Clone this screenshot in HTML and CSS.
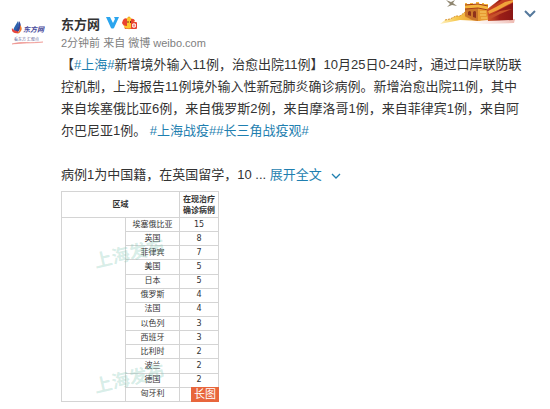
FILE: index.html
```html
<!DOCTYPE html>
<html lang="zh-CN">
<head>
  <meta charset="UTF-8" />
  <meta name="viewport" content="width=device-width, initial-scale=1" />
  <title>东方网 - 微博</title>
  <link rel="stylesheet" href="styles.css">
</head>
<body>
  <article class="post">
    <a class="avatar" href="#" aria-label="东方网">
      <svg width="34" height="28" viewBox="0 0 34 28">
        <path d="M7 2 C9 6 8 11 3 13 C1 10 5 6 7 2Z" fill="#2c63ae"/>
        <path d="M8 2 C11 6 10 10 7 13 L3 13 C7 10 8 7 8 2Z" fill="#33459b"/>
        <path d="M1 9 C0 13 4 16 9 13 C6 12 3 12 1 9Z" fill="#e8453c"/>
        <path d="M9 6 C12 9 11 13 6 15 C9 12 9 9 9 6Z" fill="#ee7a2e"/>
        <path d="M1 25 C10 22 20 25 32 23 C20 24 10 24 1 25Z" fill="#ec8a85" stroke="#ec8a85" stroke-width=".5"/>
        <text class="logo-name" x="12" y="13">东方网</text>
        <text class="logo-motto" x="3" y="22">看东方 汇观点</text>
      </svg>
    </a>

    <div class="main">
      <header class="head">
        <div class="name-row">
          <a class="name" href="#">东方网</a>
          <svg class="verified" width="13" height="12" viewBox="0 0 13 12">
            <path d="M0 0 H4 L7 6 L9 2 L8 0 H13 L8 11 Q6.500 12 5 11Z" fill="#2ba5ee"/>
          </svg>
          <svg width="16" height="14" viewBox="0 0 16 14">
            <circle cx="7" cy="2" r="1.600" fill="#f5a623"/>
            <circle cx="7" cy="7.500" r="5.800" fill="#fcc62d"/>
            <path d="M1 4 Q3 1 5 3 L5 10 Q1 10 0 7Z" fill="#e9432f"/>
            <path d="M9 3 Q12 2 13 5 L9 7Z" fill="#e9432f"/>
            <path d="M2 11 Q7 14 10 11 L10 13 H3Z" fill="#ee6b27"/>
            <path d="M6 5 V7 M8.500 5 V7" stroke="#7a3914"/>
            <rect x="9" y="6" width="6" height="7" rx="1" fill="#e8402f"/>
            <path d="M10.500 8 H13.500 V11 H10.500Z M12 7 V12" fill="none" stroke="#fff" stroke-width=".8"/>
          </svg>
        </div>
        <p class="from"><a href="#">2分钟前</a> 来自 <a href="#">微博 weibo.com</a></p>
      </header>

      <p class="text">【<a href="#">#上海#</a>新增境外输入11例，治愈出院11例】10月25日0-24时，通过口岸联防联控机制，上海报告11例境外输入性新冠肺炎确诊病例。新增治愈出院11例，其中来自埃塞俄比亚6例，来自俄罗斯2例，来自摩洛哥1例，来自菲律宾1例，来自阿尔巴尼亚1例。 <a href="#">#上海战疫#</a><a href="#">#长三角战疫观#</a><br><br>病例1为中国籍，在英国留学，10 ... <a href="#">展开全文
        <svg class="unfold" width="10" height="6" viewBox="0 0 10 6"><path d="M1 1 L5 5 L9 1" fill="none" stroke="#1f7fb0" stroke-width="1.300"/></svg></a></p>

      <div class="picture">
        <table class="cases">
          <thead>
            <tr><th colspan="2">区域</th><th>在现治疗<br>确诊病例</th></tr>
          </thead>
          <tbody>
            <tr><td class="group" rowspan="13"></td><td>埃塞俄比亚</td><td>15</td></tr>
            <tr><td>英国</td><td>8</td></tr>
            <tr><td>菲律宾</td><td>7</td></tr>
            <tr><td>美国</td><td>5</td></tr>
            <tr><td>日本</td><td>5</td></tr>
            <tr><td>俄罗斯</td><td>4</td></tr>
            <tr><td>法国</td><td>4</td></tr>
            <tr><td>以色列</td><td>3</td></tr>
            <tr><td>西班牙</td><td>3</td></tr>
            <tr><td>比利时</td><td>2</td></tr>
            <tr><td>波兰</td><td>2</td></tr>
            <tr><td>德国</td><td>2</td></tr>
            <tr><td>匈牙利</td><td></td></tr>
          </tbody>
        </table>
        <span class="watermark watermark-top">上海发布</span>
        <span class="watermark watermark-bottom">上海发布</span>
        <span class="long-tag">长图</span>
      </div>
    </div>

    <svg class="cover" width="78" height="26" viewBox="0 0 78 26">
      <defs>
        <linearGradient id="wall" x1="0" x2="1">
          <stop offset="0" stop-color="#fff3c4"/>
          <stop offset=".4" stop-color="#f6c84e"/>
          <stop offset="1" stop-color="#e8942c"/>
        </linearGradient>
        <linearGradient id="hill" x1="0" x2="1">
          <stop offset="0" stop-color="#d9612b"/>
          <stop offset=".5" stop-color="#9c1f18"/>
          <stop offset="1" stop-color="#8a1615"/>
        </linearGradient>
        <linearGradient id="mist" x1="0" x2="1">
          <stop offset="0" stop-color="#fff" stop-opacity="0"/>
          <stop offset="1" stop-color="#eeb9b0"/>
        </linearGradient>
      </defs>
      <path d="M8 0 L12 4 L9 7 L14 5 L19 6 L15 3 L17 0 L13 2Z" fill="#8f8670"/>
      <path d="M20 21 L77 19 L76 23 L45 24Z" fill="url(#mist)"/>
      <path d="M48 10 L61 0 H75 V20 L50 21Z" fill="url(#hill)"/>
      <path d="M50 10 L60 3 L64 0 H75 V3 L61 10 L51 16Z" fill="#c33c20"/>
      <path d="M50 11 L58 7 L67 2 L75 0 V2 L60 10 L51 14Z" fill="#f0a23a"/>
      <path d="M52 16 L62 11 L74 9 L62 14 L52 19Z" fill="#c6502a"/>
      <path d="M2 24 L7 20 L12 19 L18 16 L22 16 L27 12 L32 14 L40 19 L43 21 L22 20Z" fill="url(#wall)"/>
      <path d="M7 20 L12 19 L18 16 L22 16 L27 12" fill="none" stroke="#d8922e" stroke-dasharray="2 1"/>
      <path d="M27 8 L40 7 L49 10 L50 20 L40 21 L27 17Z" fill="#e79b31"/>
      <path d="M27 9 L40 8 V21 L34 20 L27 16Z" fill="#c9762a"/>
      <path d="M27 3 H29 V4 H32 V3 H35 V4 H38 V2 H41 V4 H44 V3 H46 V4 H50 V10 L40 8 L27 9Z" fill="#f4b63d"/>
      <path d="M27 5 L40 4 L50 6 M27 9 L40 8 L50 10" fill="none" stroke="#a63c18"/>
      <path d="M30 15 V12 Q32 10 33 12 V16 M35 17 V12 Q37 10 38 12 V18" fill="#8e321b"/>
      <path d="M42 12 H48 M42 15 H48 M43 18 H49" stroke="#f9d06b"/>
    </svg>
    <button class="menu" type="button" aria-label="更多">
      <svg width="12" height="8" viewBox="0 0 12 8"><path d="M1 1 L6 6 L11 1" fill="none" stroke="#55799c" stroke-width="2"/></svg>
    </button>
  </article>
</body>
</html>
```
FILE: styles.css
```css
body {
  margin: 0;
  background-color: #fff;
  color: #333;
  font-family: "Liberation Sans", "Noto Sans CJK SC", sans-serif;
  font-size: 13px;
}

a {
  color: #1f7fb0;
  text-decoration: none;
}

p {
  margin: 0;
}

svg {
  display: block;
}

.post {
  position: relative;
  display: flex;
  gap: 16px;
  padding: 14px 26px 8px 11px;
}

.avatar {
  flex: none;
  padding-top: 5px;
}

.logo-name {
  font-size: 7px;
  font-weight: bold;
  font-style: italic;
  fill: #45479a;
}

.logo-motto {
  font-size: 4px;
  fill: #6b6b9c;
}

.main {
  flex: 1;
  min-width: 0;
}

/* name and source */
.name-row {
  display: flex;
  align-items: center;
  gap: 6px;
  height: 18px;
}

.name {
  color: #333;
  font-weight: bold;
}

.verified {
  margin-right: -3px;
}

.from {
  color: #808080;
  font-size: 11px;
  line-height: 22px;
}

.from a {
  color: #808080;
}

.text {
  line-height: 22px;
}

.unfold {
  display: inline-block;
  margin-left: 6px;
  vertical-align: middle;
}

/* long picture */
.picture {
  position: relative;
  width: 158px;
  height: 211px;
  margin-top: 5px;
  overflow: hidden;
}

.cases {
  width: 100%;
  height: 100%;
  border-collapse: collapse;
  table-layout: auto;
  font-size: 8px;
  line-height: 10px;
  text-align: center;
}

.cases th,
.cases td {
  padding: 0;
  border: 1px solid #d4d4d4;
}

.cases th {
  height: 25px;
  line-height: 11px;
}

.cases td:last-child {
  width: 38px;
  font-family: "DejaVu Sans", sans-serif;
}

.cases .group {
  width: 63px;
}

.watermark {
  position: absolute;
  left: 32px;
  color: rgba(120, 195, 175, 0.3);
  font-family: "Noto Sans CJK SC", sans-serif;
  font-size: 18px;
  font-weight: bold;
  line-height: 20px;
  transform: rotate(-13deg);
}

.watermark-top {
  top: 51px;
}

.watermark-bottom {
  top: 176px;
}

.long-tag {
  position: absolute;
  right: 0;
  bottom: 0;
  padding: 0 3px;
  background-color: #e8663c;
  color: #fff;
  font-size: 11px;
  line-height: 15px;
}

/* corner decoration */
.cover {
  position: absolute;
  top: 0;
  right: 34px;
}

.menu {
  position: absolute;
  top: 10px;
  right: 14px;
  padding: 0;
  border: 0;
  background: none;
  cursor: pointer;
}
```
